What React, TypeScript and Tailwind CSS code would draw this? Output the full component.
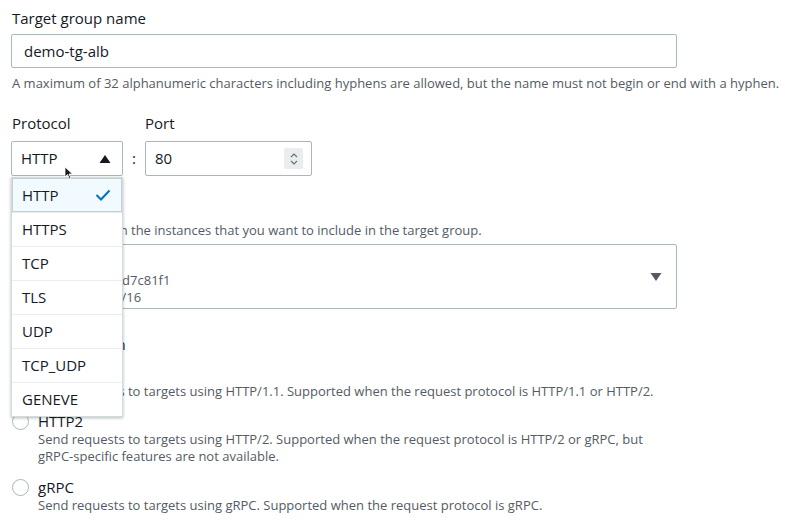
import React from "react";

const items = ["HTTP", "HTTPS", "TCP", "TLS", "UDP", "TCP_UDP", "GENEVE"];

function Radio() {
  return <span className="mt-[2px] h-[17px] w-[17px] shrink-0 rounded-full border-[1.5px] border-[#aab7b8] bg-white" />;
}

function RadioOption({ label, desc }: { label: string; desc: React.ReactNode }) {
  return (
    <div className="flex gap-[9px] pl-[12px]">
      <Radio />
      <div className="flex flex-col">
        <div className="text-[15px] leading-[20px] text-[#16191f]">{label}</div>
        <div className="text-[13px] leading-[17px] text-[#545b64]">{desc}</div>
      </div>
    </div>
  );
}

export default function App() {
  return (
    <div
      className="relative h-[524px] w-[792px] overflow-hidden bg-white text-[#16191f]"
      style={{ fontFamily: "'Open Sans', Roboto, sans-serif" }}
    >
      <div className="flex flex-col px-[11px] pt-[7px]">
        <div className="pl-[1px] text-[15px] leading-[22px]">Target group name</div>
        <div className="mt-[5px] flex h-[34px] w-[666px] items-center rounded-[2px] border border-[#aab7b8] px-[12px] text-[15px]">
          demo-tg-alb
        </div>
        <div className="mt-[6px] pl-[1px] text-[13px] leading-[18px] text-[#545b64]">
          A maximum of 32 alphanumeric characters including hyphens are allowed, but the name must not begin or end with a hyphen.
        </div>

        <div className="mt-[20px] flex items-start">
          <div className="flex flex-col">
            <div className="pl-[1px] text-[15px] leading-[22px]">Protocol</div>
            <div className="relative mt-[7px]">
              <div className="flex h-[35px] w-[112px] items-center justify-between rounded-[2px] border border-[#aab7b8] pl-[9px] pr-[11px] text-[15px]">
                <span>HTTP</span>
                <svg width="12" height="10" viewBox="0 0 12 10">
                  <path d="M6 1 L11.5 9 L0.5 9 Z" fill="#16191f" />
                </svg>
              </div>
            </div>
          </div>
          <div className="mt-[29px] flex h-[35px] w-[22px] items-center justify-center text-[15px]">:</div>
          <div className="flex flex-col">
            <div className="text-[15px] leading-[22px]">Port</div>
            <div className="mt-[7px] flex h-[35px] w-[167px] items-center justify-between rounded-[2px] border border-[#aab7b8] pl-[9px] pr-[8px] text-[15px]">
              <span>80</span>
              <div className="flex h-[21px] w-[19px] flex-col items-center justify-center rounded-[2px] bg-[#eaeded]">
                <svg width="10" height="16" viewBox="0 0 10 16">
                  <path d="M2 6 L5 3 L8 6" stroke="#687078" strokeWidth="1.2" fill="none" />
                  <path d="M2 10 L5 13 L8 10" stroke="#687078" strokeWidth="1.2" fill="none" />
                </svg>
              </div>
            </div>
          </div>
        </div>

        <div className="mt-[45px] pl-[1px] text-[13px] leading-[18px] text-[#545b64]">
          Select the VPC with the instances that you want to include in the target group.
        </div>
        <div className="mt-[5px] flex h-[65px] w-[666px] items-center justify-between rounded-[2px] border border-[#aab7b8] pl-[15px] pr-[14px]">
          <div className="flex flex-col pt-[24px] text-[13px] leading-[17px] text-[#545b64]">
            <span>vpc-0e4f1b2a5cd7c81f1</span>
            <span>IPv4: 172.31.0.0/16</span>
          </div>
          <svg width="12" height="10" viewBox="0 0 12 10">
            <path d="M0.5 1 L11.5 1 L6 9 Z" fill="#545b64" />
          </svg>
        </div>

        <div className="mt-[24px] pl-[1px] text-[15px] leading-[22px]">Protocol version</div>
      </div>

      <div className="mt-[8px] flex flex-col">
        <RadioOption
          label="HTTP1"
          desc="Send requests to targets using HTTP/1.1. Supported when the request protocol is HTTP/1.1 or HTTP/2."
        />
        <div className="mt-[11px]">
          <RadioOption
            label="HTTP2"
            desc={
              <>
                Send requests to targets using HTTP/2. Supported when the request protocol is HTTP/2 or gRPC, but
                <br />
                gRPC-specific features are not available.
              </>
            }
          />
        </div>
        <div className="mt-[12px]">
          <RadioOption
            label="gRPC"
            desc="Send requests to targets using gRPC. Supported when the request protocol is gRPC."
          />
        </div>
      </div>

      {/* Dropdown menu overlay */}
      <div className="absolute left-[11px] top-[177px] w-[112px] border border-[#d5dbdb] bg-white shadow-[0_1px_3px_rgba(0,28,36,0.3)]">
        {items.map((it, i) =>
          i === 0 ? (
            <div
              key={it}
              className="flex h-[34px] items-center justify-between border border-[#c3d0d7] bg-[#f1faff] pl-[9px] pr-[10px] text-[15px]"
            >
              <span>{it}</span>
              <svg width="16" height="12" viewBox="0 0 16 12">
                <path d="M1.5 6 L6 10.5 L14.5 1.5" stroke="#0073bb" strokeWidth="2" fill="none" />
              </svg>
            </div>
          ) : (
            <div
              key={it}
              className="flex h-[34px] items-center border-t border-[#eaeded] pl-[10px] text-[15px]"
            >
              {it}
            </div>
          )
        )}
      </div>

      {/* mouse cursor */}
      <svg className="absolute left-[64px] top-[166px]" width="10" height="14" viewBox="0 0 10 14">
        <path d="M1 1 L1 11 L3.5 8.5 L5.5 13 L7 12.3 L5 8 L8.5 8 Z" fill="#16191f" stroke="white" strokeWidth="0.8" />
      </svg>
    </div>
  );
}
